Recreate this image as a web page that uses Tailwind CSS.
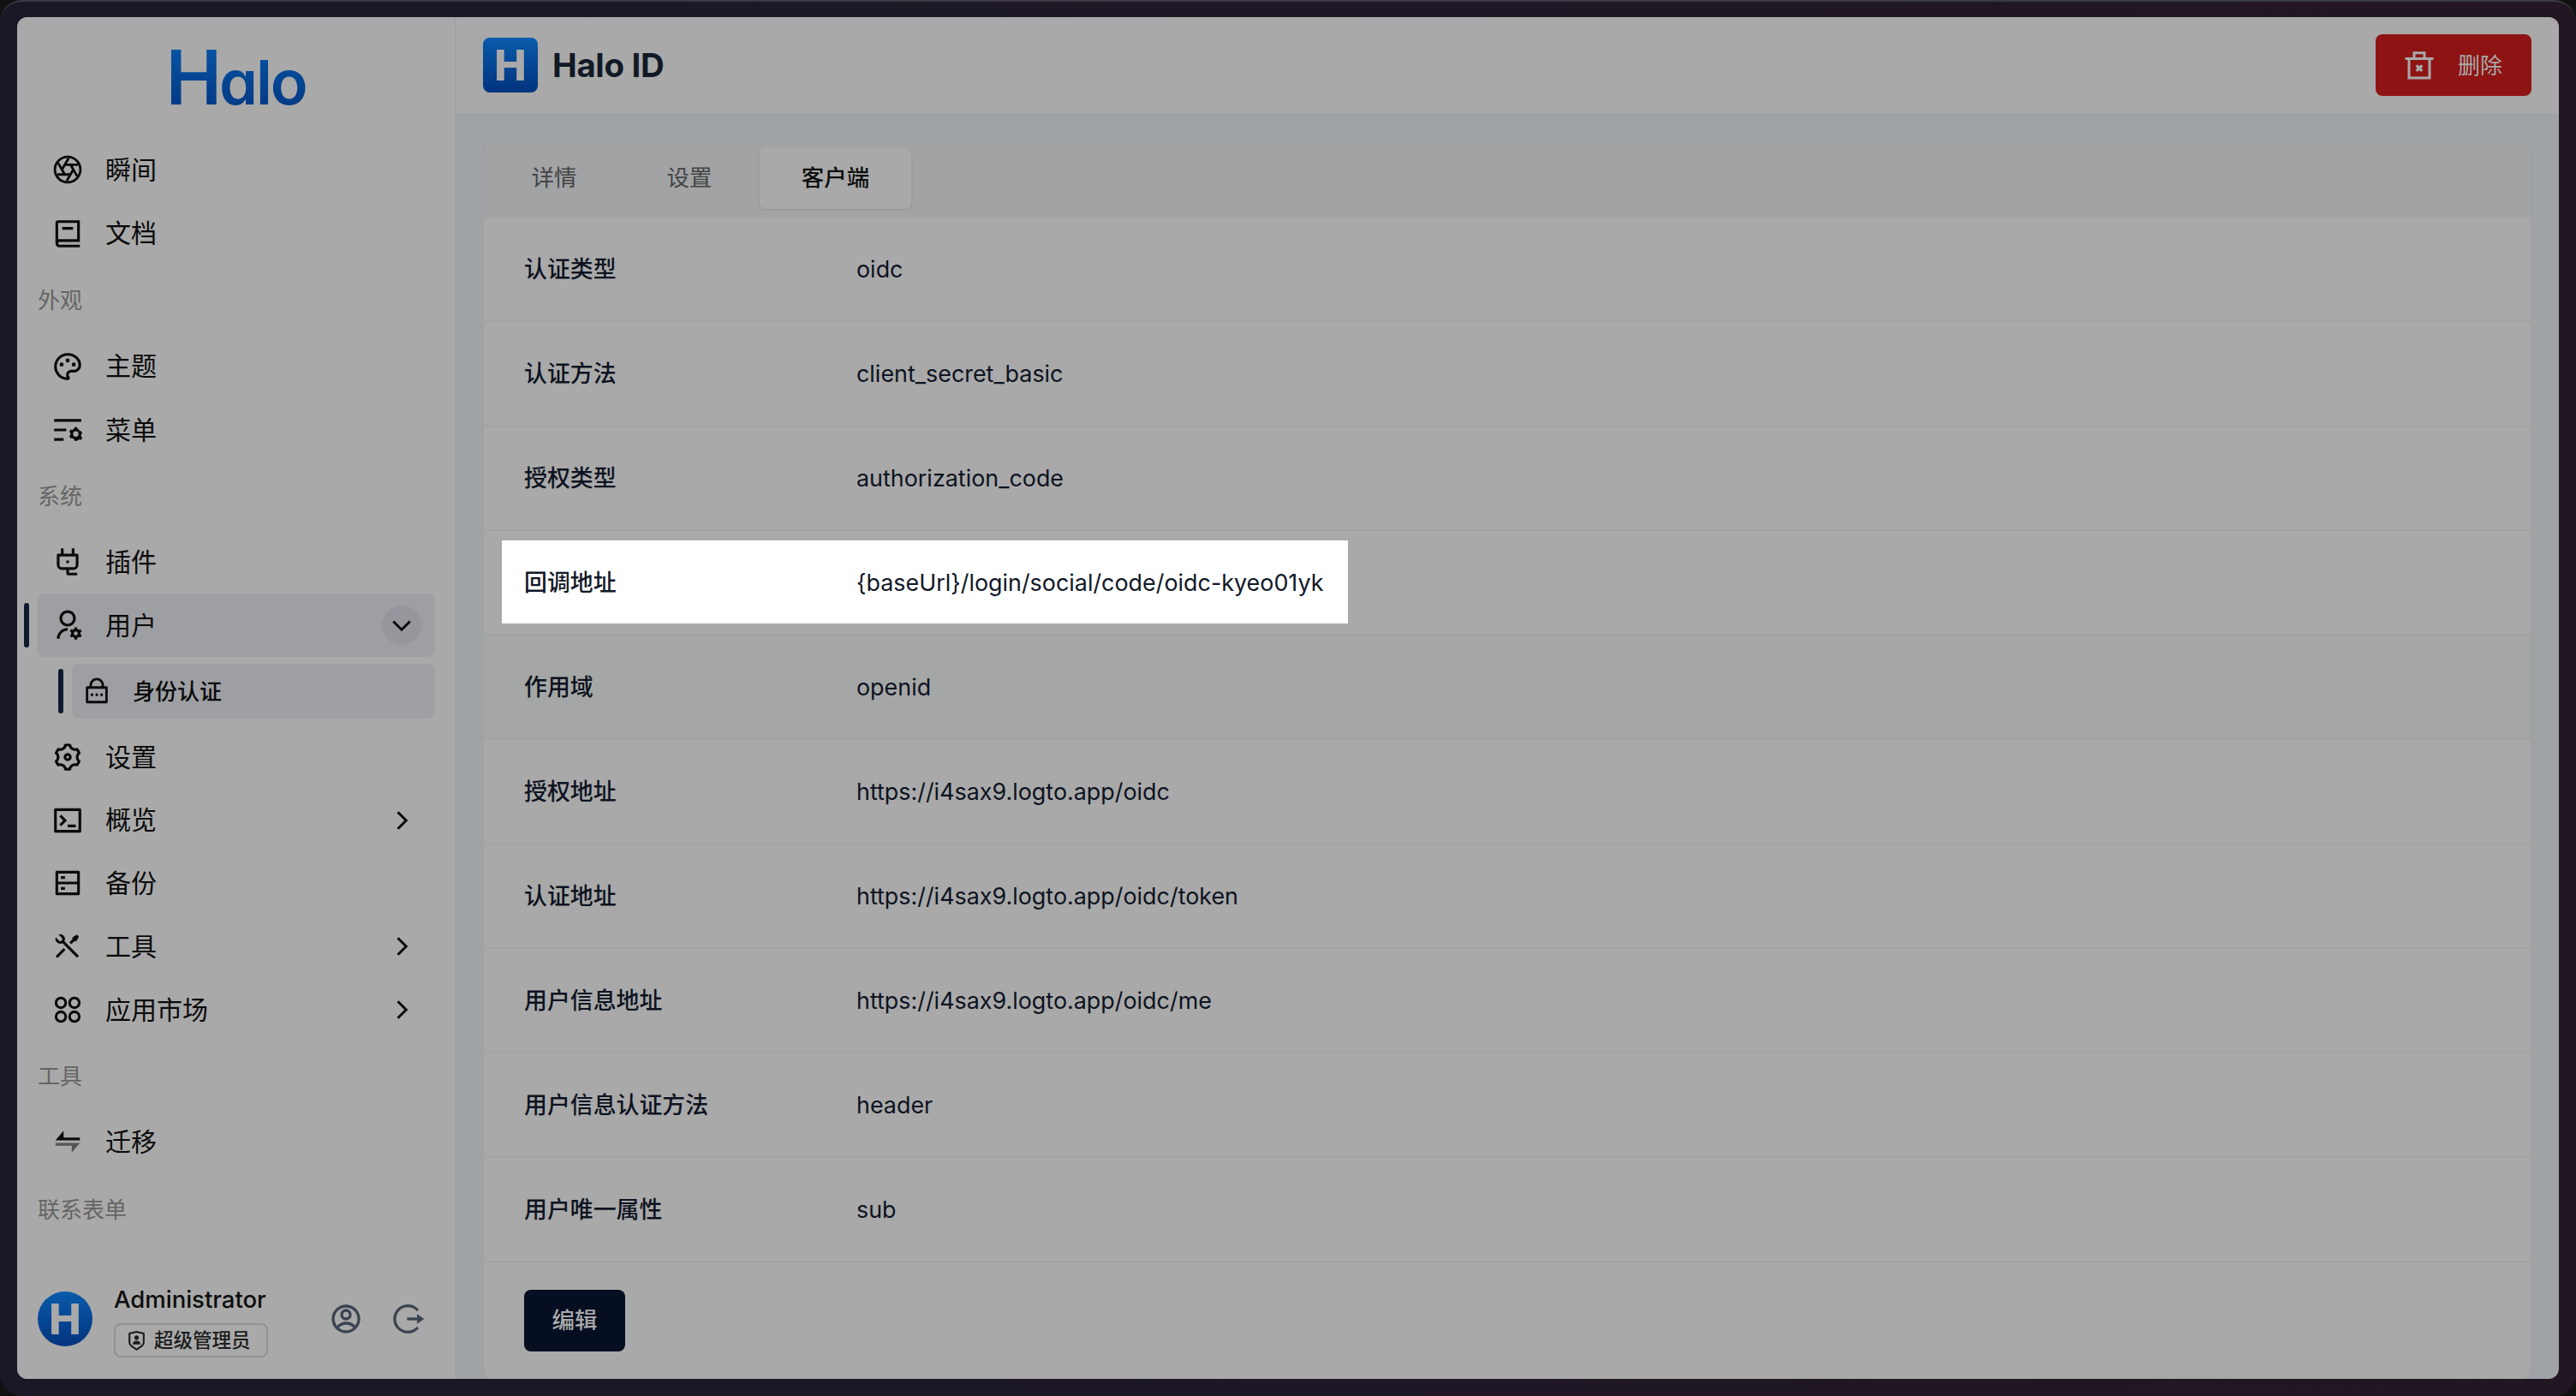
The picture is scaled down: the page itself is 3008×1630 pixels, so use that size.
<!DOCTYPE html>
<html lang="en">
<head>
    <meta charset="UTF-8">
    <title>Halo ID</title>
    <script src="https://cdn.jsdelivr.net/npm/@tailwindcss/browser@4"></script>
</head>
<body class="bg-[#111]">
<div class="w-[3008px] h-[1630px] overflow-hidden rounded-[26px] border-t-2 border-[#3a3a44] bg-gradient-to-r from-[#181826] to-[#231623] pt-[18px] pb-[20px] px-[20px] font-[Inter,'Noto_Sans_CJK_SC',sans-serif]">
    <div class="flex h-[1590px] overflow-hidden rounded-[12px] bg-[#9fa3a6]">

        <!-- Sidebar -->
        <aside class="w-[513px] shrink-0 flex flex-col bg-[#a9a9a9] border-r-2 border-[#a2a3a5] relative">
            <div class="h-[141px] shrink-0 flex justify-center pt-[17px]">
                <div class="h-[106px] leading-[106px] font-semibold bg-gradient-to-b from-[#0a5bab] to-[#03337e] bg-clip-text text-transparent [font-feature-settings:'cv11']"><span class="text-[88px] tracking-[-3px]">H</span><span class="text-[72px] tracking-[-2px]">alo</span></div>
            </div>

            <nav class="pl-[24px] pr-[23px] text-[30px] text-[#0a0a0a]">
                <a class="flex items-center h-[74px] pl-[16px]">
                    <svg class="w-[38px] h-[38px] mr-[25px]" viewBox="0 0 24 24" fill="none" stroke="currentColor" stroke-width="1.8"><circle cx="12" cy="12" r="9.4"/><path d="m14.1 8.4 4.9 8.4M9.9 8.4h9.7M7.8 12l4.9-8.4M9.9 15.6 5 7.2M14.1 15.6H4.4M16.2 12l-4.9 8.4"/></svg>
                    瞬间
                </a>
                <a class="flex items-center h-[75px] pl-[16px]">
                    <svg class="w-[38px] h-[38px] mr-[25px]" viewBox="0 0 24 24" fill="currentColor"><path d="M21 18H6a1 1 0 0 0 0 2h15v2H6a3 3 0 0 1-3-3V4a2 2 0 0 1 2-2h16v16zM5 16.05c.162-.033.329-.05.5-.05H19V4H5v12.05zM16 9H8V7h8v2z"/></svg>
                    文档
                </a>

                <div class="h-[80px] flex items-center text-[26px] text-[#656565]">外观</div>
                <a class="flex items-center h-[75px] pl-[16px]">
                    <svg class="w-[38px] h-[38px] mr-[25px]" viewBox="0 0 24 24" fill="currentColor"><path d="M12 2c5.522 0 10 3.978 10 8.889a5.558 5.558 0 0 1-5.556 5.555h-1.966c-.922 0-1.667.745-1.667 1.667 0 .422.167.811.422 1.1.267.3.434.689.434 1.122C13.667 21.256 12.9 22 12 22 6.478 22 2 17.522 2 12S6.478 2 12 2zm-1.189 16.111a3.664 3.664 0 0 1 3.667-3.667h1.966A3.558 3.558 0 0 0 20 10.89C20 7.139 16.468 4 12 4a8 8 0 0 0-.676 15.972 3.648 3.648 0 0 1-.513-1.86zM7.5 12a1.5 1.5 0 1 1 0-3 1.5 1.5 0 0 1 0 3zm9 0a1.5 1.5 0 1 1 0-3 1.5 1.5 0 0 1 0 3zM12 9a1.5 1.5 0 1 1 0-3 1.5 1.5 0 0 1 0 3z"/></svg>
                    主题
                </a>
                <a class="flex items-center h-[74px] pl-[16px]">
                    <svg class="w-[38px] h-[38px] mr-[25px]" viewBox="0 0 24 24" fill="currentColor"><path d="M2 18h7v2H2v-2zm0-7h9v2H2v-2zm0-7h20v2H2V4zm18.674 9.025l1.156-.391 1 1.732-.916.805a4.017 4.017 0 0 1 0 1.658l.916.805-1 1.732-1.156-.391c-.41.37-.898.655-1.435.83L19 20h-2l-.24-1.196a3.996 3.996 0 0 1-1.434-.83l-1.156.392-1-1.732.916-.805a4.017 4.017 0 0 1 0-1.658l-.916-.805 1-1.732 1.156.391c.41-.37.898-.655 1.435-.83L17 10h2l.24 1.196c.536.174 1.024.46 1.434.83zM18 17a2 2 0 1 0 0-4 2 2 0 0 0 0 4z"/></svg>
                    菜单
                </a>

                <div class="h-[80px] flex items-center text-[26px] text-[#656565]">系统</div>
                <a class="flex items-center h-[74px] pl-[16px]">
                    <svg class="w-[38px] h-[38px] mr-[25px]" viewBox="0 0 24 24" fill="currentColor"><path d="M13 18v2h6v2h-6a2 2 0 0 1-2-2v-2H8a4 4 0 0 1-4-4V7a1 1 0 0 1 1-1h2V2h2v4h6V2h2v4h2a1 1 0 0 1 1 1v7a4 4 0 0 1-4 4h-3zM6 8v6a2 2 0 0 0 2 2h8a2 2 0 0 0 2-2V8H6zm5 3h2v2h-2z"/></svg>
                    插件
                </a>

                <!-- active group -->
                <div class="relative">
                    <span class="absolute left-[-16px] top-[11px] w-[6px] h-[52px] rounded-full bg-[#0f1a30]"></span>
                    <a class="flex items-center h-[74px] pl-[16px] rounded-[8px] bg-[#9e9fa3]">
                        <svg class="w-[38px] h-[38px] mr-[25px]" viewBox="0 0 24 24" fill="currentColor"><path d="M12 14v2a6 6 0 0 0-6 6H4a8 8 0 0 1 8-8zm0-1c-3.315 0-6-2.685-6-6s2.685-6 6-6 6 2.685 6 6-2.685 6-6 6zm0-2c2.21 0 4-1.79 4-4s-1.79-4-4-4-4 1.79-4 4 1.79 4 4 4zm2.595 7.812a3.51 3.51 0 0 1 0-1.623l-.992-.573 1-1.732.992.573A3.496 3.496 0 0 1 17 14.645V13.5h2v1.145c.532.158 1.012.44 1.405.812l.992-.573 1 1.732-.992.573a3.51 3.51 0 0 1 0 1.622l.992.573-1 1.732-.992-.573a3.496 3.496 0 0 1-1.405.812V22.5h-2v-1.145a3.496 3.496 0 0 1-1.405-.812l-.992.573-1-1.732.992-.572zM18 19.5a1.5 1.5 0 1 0 0-3 1.5 1.5 0 0 0 0 3z"/></svg>
                        用户
                        <span class="ml-auto mr-[16px] w-[46px] h-[46px] rounded-full bg-[#96979c] flex items-center justify-center">
                            <svg class="w-9 h-9" viewBox="0 0 24 24" fill="none" stroke="currentColor" stroke-width="2"><path d="m5.5 9 6.5 6.5L18.5 9"/></svg>
                        </span>
                    </a>
                </div>
                <div class="relative ml-[40px] mt-[8px] mb-[8px]">
                    <span class="absolute left-[-16px] top-[6px] w-[6px] h-[52px] rounded-full bg-[#0f1a30]"></span>
                    <a class="flex items-center h-[64px] pl-[12px] rounded-[8px] bg-[#9e9fa3] text-[26px] font-medium">
                        <svg class="w-[34px] h-[34px] mr-[25px]" viewBox="0 0 24 24" fill="currentColor"><path d="M18 8h2a1 1 0 0 1 1 1v12a1 1 0 0 1-1 1H4a1 1 0 0 1-1-1V9a1 1 0 0 1 1-1h2V7a6 6 0 1 1 12 0v1zM5 10v10h14V10H5zm6 4h2v2h-2v-2zm-4 0h2v2H7v-2zm8 0h2v2h-2v-2zm1-6V7a4 4 0 1 0-8 0v1h8z"/></svg>
                        身份认证
                    </a>
                </div>

                <a class="flex items-center h-[74px] pl-[16px]">
                    <svg class="w-[38px] h-[38px] mr-[25px]" viewBox="0 0 24 24" fill="currentColor"><path d="M3.34 17a10.018 10.018 0 0 1-.978-2.326 3 3 0 0 0 .002-5.347A9.99 9.99 0 0 1 4.865 4.99a3 3 0 0 0 4.631-2.674 9.99 9.99 0 0 1 5.007.002 3 3 0 0 0 4.632 2.672c.579.59 1.093 1.261 1.525 2.01.433.749.757 1.53.978 2.326a3 3 0 0 0-.002 5.347 9.99 9.99 0 0 1-2.501 4.337 3 3 0 0 0-4.631 2.674 9.99 9.99 0 0 1-5.007-.002 3 3 0 0 0-4.632-2.672A10.018 10.018 0 0 1 3.34 17zm5.66.196a4.993 4.993 0 0 1 2.25 2.77c.499.047 1 .048 1.499.001A4.993 4.993 0 0 1 15 17.197a4.993 4.993 0 0 1 3.525-.565c.29-.408.54-.843.748-1.298A4.993 4.993 0 0 1 18 12c0-1.26.47-2.437 1.273-3.334a8.126 8.126 0 0 0-.75-1.298A4.993 4.993 0 0 1 15 6.804a4.993 4.993 0 0 1-2.25-2.77c-.499-.047-1-.048-1.499-.001A4.993 4.993 0 0 1 9 6.803a4.993 4.993 0 0 1-3.525.565 7.99 7.99 0 0 0-.748 1.298A4.993 4.993 0 0 1 6 12c0 1.26-.47 2.437-1.273 3.334a8.126 8.126 0 0 0 .75 1.298A4.993 4.993 0 0 1 9 17.196zM12 15a3 3 0 1 1 0-6 3 3 0 0 1 0 6zm0-2a1 1 0 1 0 0-2 1 1 0 0 0 0 2z"/></svg>
                    设置
                </a>
                <a class="flex items-center h-[73px] pl-[16px]">
                    <svg class="w-[38px] h-[38px] mr-[25px]" viewBox="0 0 24 24" fill="currentColor"><path d="M3 3h18a1 1 0 0 1 1 1v16a1 1 0 0 1-1 1H3a1 1 0 0 1-1-1V4a1 1 0 0 1 1-1zm1 2v14h16V5H4zm8 10h6v2h-6v-2zm-3.333-3L5.838 9.172l1.415-1.415L11.495 12l-4.242 4.243-1.415-1.415L8.667 12z"/></svg>
                    概览
                    <svg class="w-9 h-9 ml-auto mr-[21px]" viewBox="0 0 24 24" fill="none" stroke="currentColor" stroke-width="2"><path d="m9 5.5 6.5 6.5L9 18.5"/></svg>
                </a>
                <a class="flex items-center h-[74px] pl-[16px]">
                    <svg class="w-[38px] h-[38px] mr-[25px]" viewBox="0 0 24 24" fill="currentColor"><path d="M5 11h14V5H5v6zm16-7v16a1 1 0 0 1-1 1H4a1 1 0 0 1-1-1V4a1 1 0 0 1 1-1h16a1 1 0 0 1 1 1zm-2 9H5v6h14v-6zM7 15h3v2H7v-2zm0-8h3v2H7V7z"/></svg>
                    备份
                </a>
                <a class="flex items-center h-[74px] pl-[16px]">
                    <svg class="w-[38px] h-[38px] mr-[25px]" viewBox="0 0 24 24" fill="currentColor"><path d="M5.33 3.271a3.5 3.5 0 0 1 4.254 4.963l10.709 10.71-1.414 1.414-10.71-10.71a3.502 3.502 0 0 1-4.962-4.255L5.446 7.63a1.5 1.5 0 1 0 2.121-2.121L5.33 3.27zm10.367 1.884l3.182-1.768 1.414 1.414-1.768 3.182-1.768.354-2.12 2.121-1.415-1.414 2.121-2.121.354-1.768zm-6.718 8.132l1.414 1.414-5.303 5.303a1 1 0 0 1-1.492-1.327l.078-.087 5.303-5.303z"/></svg>
                    工具
                    <svg class="w-9 h-9 ml-auto mr-[21px]" viewBox="0 0 24 24" fill="none" stroke="currentColor" stroke-width="2"><path d="m9 5.5 6.5 6.5L9 18.5"/></svg>
                </a>
                <a class="flex items-center h-[74px] pl-[16px]">
                    <svg class="w-[38px] h-[38px] mr-[25px]" viewBox="0 0 24 24" fill="none" stroke="currentColor" stroke-width="1.9"><circle cx="7" cy="6.9" r="3.6"/><circle cx="17" cy="6.9" r="3.6"/><circle cx="7" cy="17.1" r="3.6"/><circle cx="17" cy="17.1" r="3.6"/></svg>
                    应用市场
                    <svg class="w-9 h-9 ml-auto mr-[21px]" viewBox="0 0 24 24" fill="none" stroke="currentColor" stroke-width="2"><path d="m9 5.5 6.5 6.5L9 18.5"/></svg>
                </a>

                <div class="h-[80px] flex items-center text-[26px] text-[#656565]">工具</div>
                <a class="flex items-center h-[74px] pl-[16px]">
                    <svg class="w-[38px] h-[38px] mr-[25px]" viewBox="0 0 24 24"><path fill="#0a0a0a" d="M3 11 9 4v5h12v2z"/><path fill="#555" d="M21 13l-6 7v-5H3v-2z"/></svg>
                    迁移
                </a>
                <div class="h-[84px] flex items-center text-[26px] text-[#656565]">联系表单</div>
            </nav>

            <!-- Profile -->
            <div class="mt-auto flex items-center pl-[24px] pb-[25px]">
                <div class="-mt-[6px] w-16 h-16 rounded-full bg-gradient-to-b from-[#0a5bab] to-[#03337e] flex items-center justify-center text-[50px] font-extrabold text-[#a9a9a9] leading-none">H</div>
                <div class="ml-[25px]">
                    <div class="text-[27.5px] leading-[32px] font-medium text-[#0d0d0d]">Administrator</div>
                    <div class="mt-[12px] w-[180px] h-[40px] flex items-center pl-[12px] rounded-[8px] border-2 border-[#929292] text-[22.5px] font-medium text-[#1c1c1c]">
                        <svg class="w-[25px] h-[25px] mr-[8px]" viewBox="0 0 24 24" fill="currentColor"><path d="M3.783 2.826L12 1l8.217 1.826a1 1 0 0 1 .783.976v9.987a6 6 0 0 1-2.672 4.992L12 23l-6.328-4.219A6 6 0 0 1 3 13.79V3.802a1 1 0 0 1 .783-.976zM5 4.604v9.185a4 4 0 0 0 1.781 3.328L12 20.597l5.219-3.48A4 4 0 0 0 19 13.79V4.604L12 3.05 5 4.604zM12 11a2.5 2.5 0 1 1 0-5 2.5 2.5 0 0 1 0 5zm-4.473 5a4.5 4.5 0 0 1 8.946 0H7.527z"/></svg>
                        超级管理员
                    </div>
                </div>
                <svg class="-mt-[6px] w-[40px] h-[40px] ml-[71px] text-[#3b4452]" viewBox="0 0 24 24" fill="currentColor"><path d="M12 22C6.477 22 2 17.523 2 12S6.477 2 12 2s10 4.477 10 10-4.477 10-10 10zm-4.987-3.744A7.966 7.966 0 0 0 12 20c1.97 0 3.773-.712 5.167-1.892A6.979 6.979 0 0 0 12.16 16a6.981 6.981 0 0 0-5.147 2.256zM5.616 16.82A8.975 8.975 0 0 1 12.16 14a8.972 8.972 0 0 1 6.362 2.634 8 8 0 1 0-12.906.187zM12 13a4 4 0 1 1 0-8 4 4 0 0 1 0 8zm0-2a2 2 0 1 0 0-4 2 2 0 0 0 0 4z"/></svg>
                <svg class="-mt-[6px] w-[40px] h-[40px] ml-[33px] text-[#3b4452]" viewBox="0 0 24 24" fill="none" stroke="currentColor" stroke-width="2"><path d="M18.5 6a9.2 9.2 0 1 0 0 12"/><path d="M11 12h8"/><path fill="currentColor" stroke="none" d="M18 8.5 23 12l-5 3.5z"/></svg>
            </div>
        </aside>

        <!-- Main -->
        <main class="flex-1 flex flex-col min-w-0">
            <header class="h-[112px] shrink-0 bg-[#a9a9a9] flex items-center justify-between pl-[31px] pr-[32px]">
                <div class="flex items-center">
                    <div class="w-16 h-16 rounded-[8px] bg-gradient-to-b from-[#0a5bab] to-[#03337e] flex items-center justify-center text-[50px] font-extrabold text-[#a9a9a9] leading-none">H</div>
                    <h1 class="ml-[17px] mt-[2px] text-[38.4px] font-bold tracking-[-0.3px] text-[#121926]">Halo ID</h1>
                </div>
                <button class="w-[182px] h-[72px] rounded-[8px] bg-[#8e1414] flex items-center pl-[33px] text-[26px] text-[#a9a9a9]">
                    <svg class="w-9 h-9 mr-[27px]" viewBox="0 0 24 24" fill="none" stroke="currentColor" stroke-width="2"><path d="M1 7h22M4 7v15h16V7M8 7V2.5h8V7"/><path stroke-width="2.2" d="m9.8 12.2 4.4 4.4M14.2 12.2l-4.4 4.4"/></svg>
                    删除
                </button>
            </header>

            <div class="flex-1 pt-[31px] pl-[31px] pr-[32px]">
                <section class="h-[1447px] rounded-[12px] border border-[#9d9fa1] border-b-0 bg-[#a9a9a9] overflow-hidden">
                    <div class="h-[90px] bg-[#a1a3a5] border-b-2 border-[#a3a4a5] flex items-start pt-[8px] pl-[7px] text-[26.5px]">
                        <span class="w-[150px] h-[72px] flex items-center justify-center text-[#444]">详情</span>
                        <span class="ml-[8px] w-[150px] h-[72px] flex items-center justify-center text-[#444]">设置</span>
                        <span class="ml-[7px] w-[177px] h-[72px] rounded-[6px] bg-[#a9a9a9] shadow-sm flex items-center justify-center font-medium text-[#0d0d0d]">客户端</span>
                    </div>

                    <dl class="text-[26.9px] text-[#0d1321]">
                        <div class="h-[122px] border-b-2 border-[#a3a3a3] flex items-center pl-[47px]"><dt class="w-[388px] font-medium">认证类型</dt><dd>oidc</dd></div>
                        <div class="h-[122px] border-b-2 border-[#a3a3a3] flex items-center pl-[47px]"><dt class="w-[388px] font-medium">认证方法</dt><dd>client_secret_basic</dd></div>
                        <div class="h-[122px] border-b-2 border-[#a3a3a3] flex items-center pl-[47px]"><dt class="w-[388px] font-medium">授权类型</dt><dd>authorization_code</dd></div>
                        <div class="relative h-[122px] border-b-2 border-[#a3a3a3] flex items-center pl-[47px]">
                            <div class="absolute left-[21px] top-[11px] w-[988px] h-[97px] bg-white"></div>
                            <dt class="relative w-[388px] font-medium text-[#111827]">回调地址</dt><dd class="relative text-[#111827]">{baseUrl}/login/social/code/oidc-kyeo01yk</dd>
                        </div>
                        <div class="h-[122px] border-b-2 border-[#a3a3a3] flex items-center pl-[47px] bg-[#a5a7a6]"><dt class="w-[388px] font-medium">作用域</dt><dd>openid</dd></div>
                        <div class="h-[122px] border-b-2 border-[#a3a3a3] flex items-center pl-[47px]"><dt class="w-[388px] font-medium">授权地址</dt><dd>https://i4sax9.logto.app/oidc</dd></div>
                        <div class="h-[122px] border-b-2 border-[#a3a3a3] flex items-center pl-[47px]"><dt class="w-[388px] font-medium">认证地址</dt><dd>https://i4sax9.logto.app/oidc/token</dd></div>
                        <div class="h-[122px] border-b-2 border-[#a3a3a3] flex items-center pl-[47px]"><dt class="w-[388px] font-medium">用户信息地址</dt><dd>https://i4sax9.logto.app/oidc/me</dd></div>
                        <div class="h-[122px] border-b-2 border-[#a3a3a3] flex items-center pl-[47px]"><dt class="w-[388px] font-medium">用户信息认证方法</dt><dd>header</dd></div>
                        <div class="h-[122px] border-b-2 border-[#a3a3a3] flex items-center pl-[47px]"><dt class="w-[388px] font-medium">用户唯一属性</dt><dd>sub</dd></div>
                    </dl>

                    <div class="pl-[47px] pt-[32px]">
                        <button class="w-[118px] h-[72px] rounded-[8px] bg-[#060e21] text-[26.5px] font-medium text-[#a9a9a9]">编辑</button>
                    </div>
                </section>
            </div>
        </main>
    </div>
</div>
</body>
</html>
